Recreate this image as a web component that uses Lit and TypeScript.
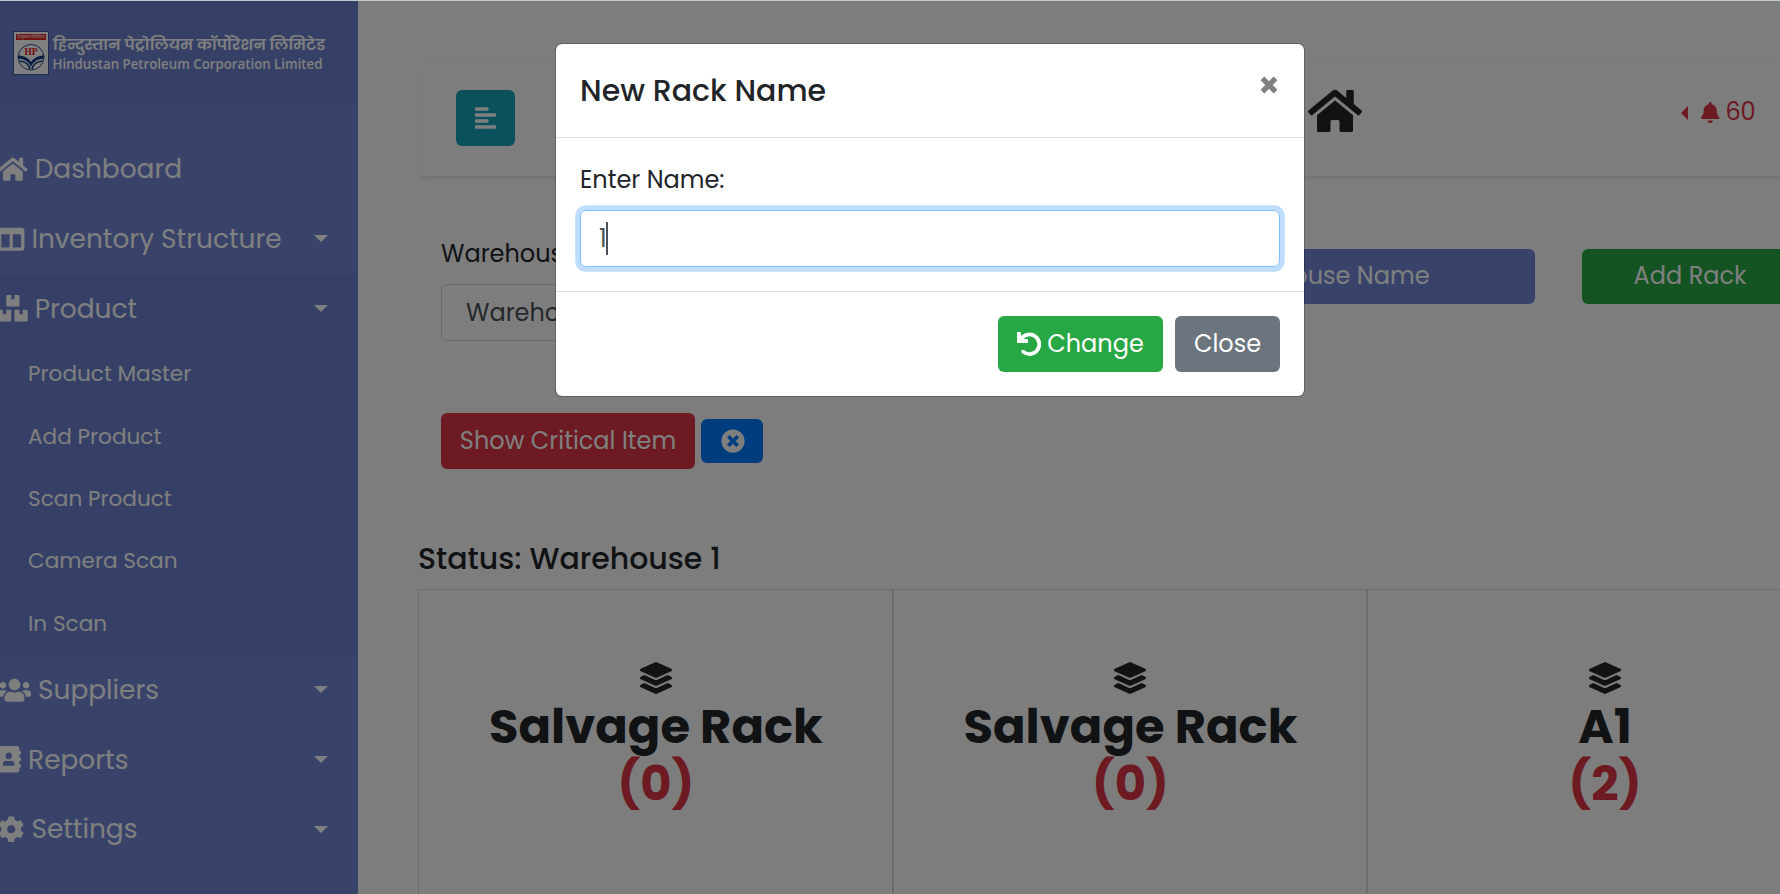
import { LitElement, html, svg, css } from "lit";
import { customElement } from "lit/decorators.js";

type Icon = { w: number; d: string };

const ICONS: Record<string, Icon> = {
  home: { w: 576, d: "M280.37 148.26L96 300.11V464a16 16 0 0 0 16 16l112.06-.29a16 16 0 0 0 15.92-16V368a16 16 0 0 1 16-16h64a16 16 0 0 1 16 16v95.64a16 16 0 0 0 16 16.05L464 480a16 16 0 0 0 16-16V300L295.67 148.26a12.19 12.19 0 0 0-15.3 0zM571.6 251.47L488 182.56V44.05a12 12 0 0 0-12-12h-56a12 12 0 0 0-12 12v72.61L318.47 43a48 48 0 0 0-61 0L4.34 251.47a12 12 0 0 0-1.6 16.9l25.5 31A12 12 0 0 0 45.15 301l235.22-193.74a12.19 12.19 0 0 1 15.3 0L530.9 301a12 12 0 0 0 16.9-1.6l25.5-31a12 12 0 0 0-1.7-16.93z" },
  columns: { w: 512, d: "M464 32H48C21.49 32 0 53.49 0 80v352c0 26.51 21.49 48 48 48h416c26.51 0 48-21.49 48-48V80c0-26.51-21.49-48-48-48zM224 416H64V160h160v256zm224 0H288V160h160v256z" },
  boxes: { w: 576, d: "M560 288h-80v96l-32-21.3-32 21.3v-96h-80c-8.8 0-16 7.2-16 16v192c0 8.8 7.2 16 16 16h224c8.8 0 16-7.2 16-16V304c0-8.8-7.2-16-16-16zm-384-64h224c8.8 0 16-7.2 16-16V16c0-8.8-7.2-16-16-16h-80v96l-32-21.3L256 96V0h-80c-8.8 0-16 7.2-16 16v192c0 8.8 7.2 16 16 16zm64 64h-80v96l-32-21.3L96 384v-96H16c-8.8 0-16 7.2-16 16v192c0 8.8 7.2 16 16 16h224c8.8 0 16-7.2 16-16V304c0-8.8-7.2-16-16-16z" },
  users: { w: 640, d: "M96 224c35.3 0 64-28.7 64-64s-28.7-64-64-64-64 28.7-64 64 28.7 64 64 64zm448 0c35.3 0 64-28.7 64-64s-28.7-64-64-64-64 28.7-64 64 28.7 64 64 64zm32 32h-64c-17.6 0-33.5 7.1-45.1 18.6 40.3 22.1 68.9 62 75.1 109.4h66c17.7 0 32-14.3 32-32v-32c0-35.3-28.7-64-64-64zm-256 0c61.9 0 112-50.1 112-112S381.9 32 320 32 208 82.1 208 144s50.1 112 112 112zm76.8 32h-8.3c-20.8 10-43.9 16-68.5 16s-47.6-6-68.5-16h-8.3C179.6 288 128 339.6 128 403.2V432c0 26.5 21.5 48 48 48h288c26.5 0 48-21.5 48-48v-28.8c0-63.6-51.6-115.2-115.2-115.2zm-223.7-13.4C161.5 263.1 145.6 256 128 256H64c-35.3 0-64 28.7-64 64v32c0 17.7 14.3 32 32 32h65.9c6.3-47.4 34.9-87.3 75.2-109.4z" },
  book: { w: 448, d: "M436 160c6.6 0 12-5.4 12-12v-40c0-6.6-5.4-12-12-12h-20V48c0-26.5-21.5-48-48-48H48C21.5 0 0 21.5 0 48v416c0 26.5 21.5 48 48 48h320c26.5 0 48-21.5 48-48v-48h20c6.6 0 12-5.4 12-12v-40c0-6.6-5.4-12-12-12h-20v-64h20c6.6 0 12-5.4 12-12v-40c0-6.6-5.4-12-12-12h-20v-64h20zm-228-32c35.3 0 64 28.7 64 64s-28.7 64-64 64-64-28.7-64-64 28.7-64 64-64zm112 236.8c0 10.6-10 19.2-22.4 19.2H118.4C106 384 96 375.4 96 364.8v-19.2c0-31.8 30.1-57.6 67.2-57.6h5c12.3 5.1 25.7 8 39.8 8s27.6-2.9 39.8-8h5c37.1 0 67.2 25.8 67.2 57.6v19.2z" },
  cog: { w: 512, d: "M487.4 315.7l-42.6-24.6c4.3-23.2 4.3-47 0-70.2l42.6-24.6c4.9-2.8 7.1-8.6 5.5-14-11.1-35.6-30-67.8-54.7-94.6-3.8-4.1-10-5.1-14.8-2.3L380.8 110c-17.9-15.4-38.5-27.3-60.8-35.1V25.8c0-5.6-3.9-10.5-9.4-11.7-36.7-8.2-74.3-7.8-109.2 0-5.5 1.2-9.4 6.1-9.4 11.7V75c-22.2 7.9-42.8 19.8-60.8 35.1L88.7 85.5c-4.9-2.8-11-1.9-14.8 2.3-24.7 26.7-43.6 58.9-54.7 94.6-1.7 5.4.6 11.2 5.5 14L67.3 221c-4.3 23.2-4.3 47 0 70.2l-42.6 24.6c-4.9 2.8-7.1 8.6-5.5 14 11.1 35.6 30 67.8 54.7 94.6 3.8 4.1 10 5.1 14.8 2.3l42.6-24.6c17.9 15.4 38.5 27.3 60.8 35.1v49.2c0 5.6 3.9 10.5 9.4 11.7 36.7 8.2 74.3 7.8 109.2 0 5.5-1.2 9.4-6.1 9.4-11.7v-49.2c22.2-7.9 42.8-19.8 60.8-35.1l42.6 24.6c4.9 2.8 11 1.9 14.8-2.3 24.7-26.7 43.6-58.9 54.7-94.6 1.5-5.5-.7-11.3-5.6-14.1zM256 336c-44.1 0-80-35.9-80-80s35.9-80 80-80 80 35.9 80 80-35.9 80-80 80z" },
  align: { w: 448, d: "M288 44v40c0 8.837-7.163 16-16 16H16c-8.837 0-16-7.163-16-16V44c0-8.837 7.163-16 16-16h256c8.837 0 16 7.163 16 16zM0 172v40c0 8.837 7.163 16 16 16h416c8.837 0 16-7.163 16-16v-40c0-8.837-7.163-16-16-16H16c-8.837 0-16 7.163-16 16zm16 312h416c8.837 0 16-7.163 16-16v-40c0-8.837-7.163-16-16-16H16c-8.837 0-16 7.163-16 16v40c0 8.837 7.163 16 16 16zm256-200H16c-8.837 0-16 7.163-16 16v40c0 8.837 7.163 16 16 16h256c8.837 0 16-7.163 16-16v-40c0-8.837-7.163-16-16-16z" },
  bell: { w: 448, d: "M224 512c35.32 0 63.97-28.65 63.97-64H160.03c0 35.35 28.65 64 63.97 64zm215.39-149.71c-19.32-20.76-55.47-51.99-55.47-154.29 0-77.7-54.48-139.9-127.94-155.16V32c0-17.67-14.32-32-31.98-32s-31.98 14.33-31.98 32v20.84C118.56 68.1 64.08 130.3 64.08 208c0 102.3-36.15 133.53-55.47 154.29-6 6.45-8.66 14.16-8.61 21.71.11 16.4 12.98 32 32.1 32h383.8c19.12 0 32-15.6 32.1-32 .05-7.55-2.61-15.27-8.61-21.71z" },
  timesCircle: { w: 512, d: "M256 8C119 8 8 119 8 256s111 248 248 248 248-111 248-248S393 8 256 8zm121.6 313.1c4.7 4.7 4.7 12.3 0 17L338 377.6c-4.7 4.7-12.3 4.7-17 0L256 312l-65.1 65.6c-4.7 4.7-12.3 4.7-17 0L134.4 338c-4.7-4.7-4.7-12.3 0-17l65.6-65-65.6-65.1c-4.7-4.7-4.7-12.3 0-17l39.6-39.6c4.7-4.7 12.3-4.7 17 0l65 65.7 65.1-65.6c4.7-4.7 12.3-4.7 17 0l39.6 39.6c4.7 4.7 4.7 12.3 0 17L312 256l65.6 65.1z" },
  layers: { w: 512, d: "M12.41 148.02l232.94 105.67c6.8 3.09 14.49 3.09 21.29 0l232.94-105.67c16.55-7.51 16.55-32.52 0-40.03L266.65 2.31a25.607 25.607 0 0 0-21.29 0L12.41 107.98c-16.55 7.51-16.55 32.53 0 40.04zm487.18 88.28l-58.09-26.33-161.64 73.27c-7.56 3.43-15.59 5.17-23.86 5.17s-16.29-1.74-23.86-5.17L70.51 209.97l-58.1 26.33c-16.55 7.5-16.55 32.5 0 40l232.94 105.59c6.8 3.08 14.49 3.08 21.29 0L499.59 276.3c16.55-7.5 16.55-32.5 0-40zm0 127.8l-57.87-26.23-161.86 73.37c-7.56 3.43-15.59 5.17-23.86 5.17s-16.29-1.74-23.86-5.17L70.29 337.87 12.41 364.1c-16.55 7.5-16.55 32.5 0 40l232.94 105.59c6.8 3.08 14.49 3.08 21.29 0L499.59 404.1c16.55-7.5 16.55-32.5 0-40z" },
};

const icon = (name: string) =>
  html`<svg class="icon w${ICONS[name].w}" viewBox="0 0 ${ICONS[name].w} 512">${svg`<path d=${ICONS[name].d}></path>`}</svg>`;

const undoIcon = html`<svg class="icon w512" viewBox="0 0 512 512">
  <path d="M12 0h60q12 0 12 12v72l48-24v90h90q12 0 12 12v60q0 12-12 12H12q-12 0-12-12V12Q0 0 12 0z"></path>
  <path d="M95 142A209 209 0 1 1 130 420" fill="none" stroke="currentColor" stroke-width="80" stroke-linecap="round"></path>
</svg>`;

const PRODUCT_LINKS = ["Product Master", "Add Product", "Scan Product", "Camera Scan", "In Scan"];
const RACKS = [
  { name: "Salvage Rack", count: 0 },
  { name: "Salvage Rack", count: 0 },
  { name: "A1", count: 2 },
];

@customElement("app-root")
export class AppRoot extends LitElement {
  static styles = css`
    :host {
      display: block; position: relative; width: 1780px; height: 894px; overflow: hidden;
      font: 400 24px/36px Poppins, Inter, "Noto Sans", sans-serif;
      color: #212529; background: #fafafa;
    }
    * { box-sizing: border-box; }
    .icon { fill: currentColor; display: inline-block; height: 1em; flex: none; overflow: visible; vertical-align: -0.125em; }
    .w576 { width: 1.125em; }
    .w512 { width: 1em; }
    .w640 { width: 1.25em; }
    .w448 { width: 0.875em; }

    .page { display: flex; height: 894px; padding-top: 1px; }

    .sidebar { flex: none; width: 358px; background: #7386d5; color: #fff; }
    .brand { height: 104px; background: #6d7fcc; }
    .logo { display: block; width: 358px; height: 104px; }
    .dev { font: 600 14.5px Poppins, "Noto Sans Devanagari", sans-serif; fill: #fff; }
    .eng { font: 600 14.2px "Open Sans", "Noto Sans", sans-serif; fill: #fff; }
    .hp { font: 700 10px "Liberation Serif", serif; fill: #e01020; }
    .strip { font: 700 3.6px Poppins, sans-serif; fill: #f5c9c9; }
    .menu { padding-top: 29.4px; }
    .item { display: flex; align-items: center; height: 69.6px; font-size: 26.4px; line-height: 39.6px; padding-right: 30px; }
    .item .icon { margin-left: -2px; margin-right: 7px; }
    .item .label { flex: 1; white-space: nowrap; }
    .caret { border: 7.2px solid transparent; border-top-color: #fff; border-bottom: 0; }
    .group { background: #6d7fcc; }
    .sub { height: 62.4px; padding: 15px 0 0 28px; font-size: 21.6px; line-height: 32.4px; }

    .main { flex: none; width: 1484px; padding: 60px 0 0 60px; }
    .navbar { display: flex; height: 115px; padding-left: 38px; background: #fafafa; box-shadow: 1.5px 1.5px 4.5px rgba(0, 0, 0, 0.1); }
    .toggle { display: flex; align-items: center; justify-content: center; width: 59px; height: 56px; margin-top: 29px; border-radius: 6px; background: #17a2b8; color: #fff; padding-bottom: 1px; }
    .homelink { margin: 26px 0 0 793px; font-size: 48px; line-height: 48px; height: 48px; display: flex; }
    .alerts { display: flex; align-items: center; height: 36px; margin: 33px 0 0 319px; color: #dc3545; }
    .alerts .icon { font-size: 21px; margin: 0 6px 0 13px; }
    .left { border: 7.2px solid transparent; border-right-color: #dc3545; border-left: 0; margin-top: 2px; }

    .tools { display: flex; padding: 60px 0 0 23px; height: 237px; }
    .picker { width: 532px; margin-right: 32px; }
    .select { height: 57px; margin-top: 12px; padding: 10px 24px; border: 1px solid #ced4da; border-radius: 6px; background: #fafafa; color: #495057; }
    .btn { display: flex; align-items: center; justify-content: center; height: 56px; border-radius: 6px; color: #fff; white-space: nowrap; }
    .tools .btn { height: 55px; margin-top: 13px; padding-bottom: 1px; }
    .rename { width: 530px; background: #7386d5; }
    .add { width: 216px; margin-left: 47px; background: #28a745; }

    .filters { display: flex; align-items: center; gap: 6px; padding-left: 23px; height: 56px; }
    .critical { width: 254px; background: #dc3545; }
    .clear { width: 62px; height: 44px; background: #007bff; padding-left: 1px; }
    .status { margin-top: 72px; height: 36px; font-size: 30px; font-weight: 500; }
    .racks { display: flex; margin-top: 12px; height: 310px; }
    .rack { flex: none; width: 474.6px; border: 1px solid rgba(0, 0, 0, 0.125); display: flex; flex-direction: column; align-items: center; padding: 72px 0 0 1px; font-size: 48px; font-weight: 700; line-height: 57px; }
    .rack .icon { font-size: 32px; margin-bottom: 4px; }
    .count { color: #dc3545; }

    .backdrop { position: absolute; inset: 0; background: rgba(0, 0, 0, 0.5); padding: 43px 0 0 555px; }
    .edge { position: absolute; inset: 0 0 auto 0; height: 1px; background: #c4cac8; }
    .modal { width: 750px; border: 1px solid rgba(0, 0, 0, 0.2); border-radius: 7px; background: #fff; background-clip: padding-box; }
    .head { display: flex; justify-content: space-between; padding: 24px; height: 94px; border-bottom: 1px solid #dee2e6; }
    .title { font-size: 30px; font-weight: 500; line-height: 45px; }
    .x { width: 18px; height: 18px; margin: 8px 2.500px 0 0; fill: #808080; }
    .body { padding: 24px; height: 153px; }
    .input { display: flex; align-items: center; height: 57px; margin-top: 12px; padding-left: 18px; border: 1px solid #80bdff; border-radius: 6px; box-shadow: 0 0 0 4.8px rgba(0, 123, 255, 0.25); color: #495057; }
    .cursor { width: 2px; height: 33px; margin-left: -1px; background: #495057; }
    .foot { display: flex; justify-content: flex-end; gap: 12px; padding: 24px; border-top: 1px solid #dee2e6; }
    .change { width: 165px; background: #28a745; gap: 6px; }
    .close { width: 105px; background: #6c757d; }
  `;

  private item(name: string, label: string, caret = true) {
    return html`<div class="item">${icon(name)}<span class="label">${label}</span>${caret ? html`<i class="caret"></i>` : ""}</div>`;
  }

  private logo() {
    return html`<svg class="logo" viewBox="0 1 358 104">
      <rect x="13.5" y="31.5" width="35" height="43" fill="#fff" stroke="#4055a0"></rect>
      <rect x="16" y="34" width="30" height="6" fill="#e0241c"></rect>
      <text class="strip" x="17.2" y="38.3" textLength="27.5" lengthAdjust="spacingAndGlyphs">हिन्दुस्तान पेट्रोलियम</text>
      <circle cx="31" cy="57.3" r="12.8" fill="#fff" stroke="#123a86" stroke-width="0.9"></circle>
      <path fill="#123a86" d="M17.800 55.600c5.800 0 10.800 2.400 13.200 6.600 2.400-4.200 7.400-6.600 13.200-6.600v2.900c-5.800.2-11.200 3.200-13.200 8.200-2-5-7.400-8-13.200-8.200z"></path>
      <path fill="none" stroke="#123a86" stroke-width="1.5" d="M19.5 61c5 .5 9.500 3.200 10.500 8.200M42.500 61c-5 .5-9.500 3.200-10.500 8.200"></path>
      <text class="hp" x="24.5" y="55" textLength="13" lengthAdjust="spacingAndGlyphs">HP</text>
      <text class="dev" x="53" y="50" textLength="272" lengthAdjust="spacingAndGlyphs">हिन्दुस्तान पेट्रोलियम कॉर्पोरेशन लिमिटेड</text>
      <text class="eng" x="52.5" y="69" textLength="270" lengthAdjust="spacingAndGlyphs">Hindustan Petroleum Corporation Limited</text>
    </svg>`;
  }

  render() {
    return html`
      <div class="page">
        <nav class="sidebar">
          <div class="brand">${this.logo()}</div>
          <div class="menu">
            ${this.item("home", "Dashboard", false)} ${this.item("columns", "Inventory Structure")}
            <div class="group">
              ${this.item("boxes", "Product")} ${PRODUCT_LINKS.map((l) => html`<div class="sub">${l}</div>`)}
            </div>
            ${this.item("users", "Suppliers")} ${this.item("book", "Reports")} ${this.item("cog", "Settings")}
          </div>
        </nav>
        <main class="main">
          <div class="navbar">
            <div class="toggle">${icon("align")}</div>
            <div class="homelink">${icon("home")}</div>
            <div class="alerts"><i class="left"></i>${icon("bell")}<span>60</span></div>
          </div>
          <div class="tools">
            <div class="picker">
              <div>Warehouse</div>
              <div class="select">Warehouse 1</div>
            </div>
            <div class="btn rename">Change Warehouse Name</div>
            <div class="btn add">Add Rack</div>
          </div>
          <div class="filters">
            <div class="btn critical">Show Critical Item</div>
            <div class="btn clear">${icon("timesCircle")}</div>
          </div>
          <div class="status">Status: Warehouse 1</div>
          <div class="racks">
            ${RACKS.map((r) => html`<div class="rack">${icon("layers")}<span>${r.name}</span><span class="count">(${r.count})</span></div>`)}
          </div>
        </main>
      </div>
      <div class="backdrop">
        <div class="modal">
          <div class="head">
            <div class="title">New Rack Name</div>
            <svg class="x" viewBox="0 0 18 18"><path d="M4.3.6 9 5.2 13.7.6 17.4 4.3 12.8 9l4.6 4.7-3.7 3.7L9 12.8l-4.7 4.6L.6 13.7 5.2 9 .6 4.3z"></path></svg>
          </div>
          <div class="body">
            <div>Enter Name:</div>
            <div class="input"><span>1</span><i class="cursor"></i></div>
          </div>
          <div class="foot">
            <div class="btn change">${undoIcon}<span>Change</span></div>
            <div class="btn close">Close</div>
          </div>
        </div>
      </div>
      <div class="edge"></div>
    `;
  }
}
